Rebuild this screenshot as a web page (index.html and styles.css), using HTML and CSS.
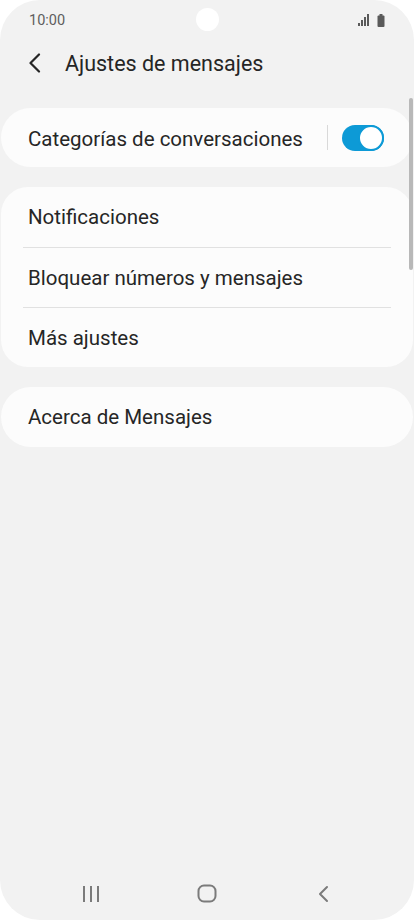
FILE: index.html
```html
<!DOCTYPE html>
<html lang="es">
<head>
    <meta charset="UTF-8">
    <title>Ajustes de mensajes</title>
    <link rel="stylesheet" href="styles.css">
</head>
<body>

<div class="screen">
    <div class="camera"></div>

    <div class="status">
        <span class="clock">10:00</span>
        <span class="status-icons">
            <svg width="12" height="12" viewBox="0 0 12 12">
                <rect x="0" y="9" width="2" height="3" fill="#5a5a5a"/>
                <rect x="3" y="6" width="2" height="6" fill="#5a5a5a"/>
                <rect x="6" y="3" width="2" height="9" fill="#5a5a5a"/>
                <rect x="9" y="0" width="2" height="12" fill="#5a5a5a"/>
            </svg>
            <svg width="8" height="13" viewBox="0 0 8 13">
                <rect x="2.5" y="0" width="3" height="2" fill="#5a5a5a"/>
                <rect x="0.5" y="1.5" width="7" height="11.5" rx="1" fill="#5a5a5a"/>
            </svg>
        </span>
    </div>

    <div class="header">
        <svg class="back" width="14" height="20" viewBox="0 0 14 20">
            <path d="M11 1.5 L2.5 10 L11 18.5" fill="none" stroke="#252525" stroke-width="2.2" stroke-linecap="round" stroke-linejoin="round"/>
        </svg>
        <h1 class="title">Ajustes de mensajes</h1>
    </div>

    <div class="content">
        <div class="card card-single">
            <div class="switch-row">
                <span class="label">Categorías de conversaciones</span>
                <span class="split"></span>
                <span class="toggle"><span class="thumb"></span></span>
            </div>
        </div>

        <div class="card card-group">
            <div class="item">Notificaciones</div>
            <div class="item">Bloquear números y mensajes</div>
            <div class="item">Más ajustes</div>
        </div>

        <div class="card card-single">
            <div class="item">Acerca de Mensajes</div>
        </div>
    </div>

    <div class="navbar">
        <span class="nav-btn">
            <svg width="20" height="18" viewBox="0 0 20 18">
                <rect x="1" y="1" width="2" height="16" fill="#7b7b7b"/>
                <rect x="8" y="1" width="2" height="16" fill="#7b7b7b"/>
                <rect x="15" y="1" width="2" height="16" fill="#7b7b7b"/>
            </svg>
        </span>
        <span class="nav-btn">
            <svg width="20" height="20" viewBox="0 0 20 20">
                <rect x="1.5" y="1.5" width="17" height="16" rx="5.5" fill="none" stroke="#7b7b7b" stroke-width="2"/>
            </svg>
        </span>
        <span class="nav-btn">
            <svg width="12" height="18" viewBox="0 0 12 18">
                <path d="M10 2 L3 9 L10 16" fill="none" stroke="#7b7b7b" stroke-width="2" stroke-linecap="round" stroke-linejoin="round"/>
            </svg>
        </span>
    </div>

    <div class="scrollbar"></div>
</div>

</body>
</html>
```

FILE: styles.css
```css
html, body
{
    margin: 0;
    padding: 0;
    background: #ffffff;
}

body
{
    font-family: Roboto, "Noto Sans", sans-serif;
    color: #262626;
}

.screen
{
    position: relative;
    width: 414px;
    height: 920px;
    border-radius: 40px;
    background: #f2f2f2;
    overflow: hidden;
    display: flex;
    flex-direction: column;
}

.camera
{
    position: absolute;
    left: 196px;
    top: 8px;
    width: 23px;
    height: 23px;
    border-radius: 50%;
    background: #ffffff;
}

.status
{
    height: 38px;
    padding: 2px 29px 0 29px;
    box-sizing: border-box;
    display: flex;
    align-items: center;
    justify-content: space-between;
    font-size: 14.5px;
    color: #5e5e5e;
}

.status-icons
{
    display: flex;
    align-items: center;
    gap: 7px;
}

.header
{
    height: 50px;
    display: flex;
    align-items: center;
    padding-left: 28px;
}

.back
{
    display: block;
}

.title
{
    margin: 0 0 0 23px;
    font-size: 21.5px;
    font-weight: normal;
    color: #252525;
}

.content
{
    padding: 20px 1px 0 1px;
    display: flex;
    flex-direction: column;
    gap: 20px;
}

.card
{
    background: #fcfcfc;
}

.card-single
{
    border-radius: 30px;
}

.card-group
{
    border-radius: 27px;
}

.switch-row
{
    height: 59px;
    display: flex;
    align-items: center;
    padding: 0 29px 0 27px;
}

.label
{
    flex: 1;
    font-size: 20.5px;
    padding-top: 2px;
}

.split
{
    width: 1px;
    height: 25px;
    background: #d9d9d9;
    margin-right: 14px;
}

.toggle
{
    position: relative;
    width: 42px;
    height: 26px;
    border-radius: 13px;
    background: #0d9ad6;
}

.thumb
{
    position: absolute;
    right: 0;
    top: 0;
    width: 22px;
    height: 22px;
    border: 2px solid #0d9ad6;
    border-radius: 50%;
    background: #ffffff;
}

.item
{
    height: 60px;
    display: flex;
    align-items: center;
    margin: 0 22px;
    padding-left: 5px;
    font-size: 20.5px;
    box-sizing: border-box;
}

.card-group .item + .item
{
    border-top: 1px solid #e1e1e1;
}

.navbar
{
    margin-top: auto;
    height: 52px;
    display: flex;
    align-items: center;
    justify-content: center;
    gap: 55.5px;
}

.nav-btn
{
    width: 60px;
    display: flex;
    justify-content: center;
}

.nav-btn svg
{
    display: block;
}

.scrollbar
{
    position: absolute;
    right: 1px;
    top: 98px;
    width: 4px;
    height: 172px;
    border-radius: 2px;
    background: #b8b8b8;
}
```
